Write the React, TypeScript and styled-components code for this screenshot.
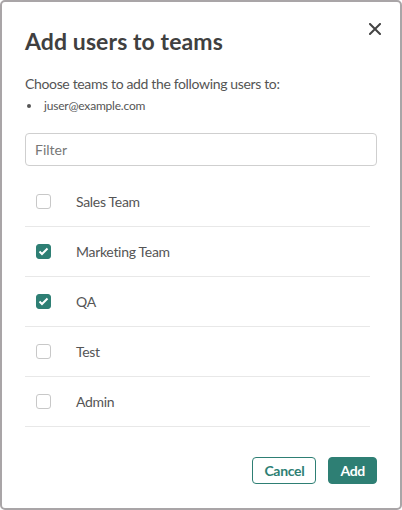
import React from "react";
import styled, { createGlobalStyle } from "styled-components";

const TEAMS = [
  { name: "Sales Team", checked: false },
  { name: "Marketing Team", checked: true },
  { name: "QA", checked: true },
  { name: "Test", checked: false },
  { name: "Admin", checked: false },
];

const GlobalStyle = createGlobalStyle`
  html, body {
    margin: 0;
    padding: 0;
    background: #ffffff;
  }
  body {
    font-family: Lato, "Noto Sans", sans-serif;
  }
  * {
    box-sizing: border-box;
  }
`;

const App = () => {
  const [teams, setTeams] = React.useState(TEAMS);

  const toggle = (index: number) => {
    setTeams((prev) =>
      prev.map((t, i) => (i === index ? { ...t, checked: !t.checked } : t))
    );
  };

  return (
    <>
      <GlobalStyle />
      <StyledDialog>
        <StyledHeader>
          <StyledTitle>Add users to teams</StyledTitle>
          <StyledClose aria-label="Close">
            <svg width="12" height="12" viewBox="0 0 12 12">
              <path
                d="M1 1 L11 11 M11 1 L1 11"
                stroke="#444"
                strokeWidth="2"
                strokeLinecap="square"
              />
            </svg>
          </StyledClose>
        </StyledHeader>

        <StyledIntro>Choose teams to add the following users to:</StyledIntro>
        <StyledUserList>
          <li>juser@example.com</li>
        </StyledUserList>

        <StyledFilter placeholder="Filter" />

        <StyledTeamList>
          {teams.map((team, i) => (
            <StyledTeamRow key={team.name} onClick={() => toggle(i)}>
              <StyledCheckbox checked={team.checked}>
                {team.checked ? (
                  <svg width="11" height="9" viewBox="0 0 11 9">
                    <path
                      d="M1.5 4.5 L4 7 L9.5 1.5"
                      fill="none"
                      stroke="#fff"
                      strokeWidth="2"
                    />
                  </svg>
                ) : null}
              </StyledCheckbox>
              <StyledTeamName>{team.name}</StyledTeamName>
            </StyledTeamRow>
          ))}
        </StyledTeamList>

        <StyledFooter>
          <StyledButton variant="secondary">Cancel</StyledButton>
          <StyledButton variant="primary">Add</StyledButton>
        </StyledFooter>
      </StyledDialog>
    </>
  );
};

export default App;

const TEAL = "#2e7f74";

const StyledDialog = styled.div`
  width: 402px;
  height: 510px;
  border: 2px solid #a9a5a7;
  border-radius: 5px;
  background: #fff;
  padding: 0 23px 0 23px;
  display: flex;
  flex-direction: column;
`;

const StyledHeader = styled.div`
  display: flex;
  justify-content: space-between;
  align-items: flex-start;
  padding-top: 25px;
`;

const StyledTitle = styled.h1`
  margin: 0;
  font-size: 23px;
  line-height: 28px;
  font-weight: 700;
  color: #404040;
  letter-spacing: 0.1px;
`;

const StyledClose = styled.button`
  border: none;
  background: none;
  padding: 0;
  margin: -8px -8px 0 0;
  width: 20px;
  height: 20px;
  display: flex;
  align-items: center;
  justify-content: center;
  cursor: pointer;
`;

const StyledIntro = styled.p`
  margin: 19px 0 0;
  font-size: 14px;
  line-height: 20px;
  color: #555;
  letter-spacing: -0.35px;
`;

const StyledUserList = styled.ul`
  margin: 4px 0 0;
  padding: 0;
  list-style: none;
  font-size: 12px;
  line-height: 16px;
  color: #555;
  letter-spacing: -0.2px;

  li {
    display: flex;
    align-items: center;
  }

  li::before {
    content: "";
    flex: 0 0 4px;
    width: 4px;
    height: 4px;
    border-radius: 50%;
    background: #555;
    margin: 0 13px 0 2px;
  }
`;

const StyledFilter = styled.input`
  margin-top: 19px;
  width: 352px;
  height: 33px;
  border: 1px solid #cfcfcf;
  border-radius: 4px;
  padding: 0 9px;
  font-family: inherit;
  font-size: 14px;
  color: #333;
  outline: none;

  &::placeholder {
    color: #777;
  }
`;

const StyledTeamList = styled.div`
  margin-top: 11px;
  width: 345px;
  display: flex;
  flex-direction: column;
`;

const StyledTeamRow = styled.label`
  height: 50px;
  display: flex;
  align-items: center;
  border-bottom: 1px solid #e8e8e8;
  padding-left: 11px;
  cursor: pointer;
`;

const StyledCheckbox = styled.span<{ checked: boolean }>`
  width: 15px;
  height: 15px;
  border-radius: 3px;
  display: flex;
  align-items: center;
  justify-content: center;
  background: ${(p) => (p.checked ? TEAL : "#fff")};
  border: 1px solid ${(p) => (p.checked ? TEAL : "#c8c8c8")};
`;

const StyledTeamName = styled.span`
  margin-left: 25px;
  font-size: 14px;
  color: #555;
  letter-spacing: -0.3px;
`;

const StyledFooter = styled.div`
  margin-top: auto;
  margin-bottom: 24px;
  display: flex;
  justify-content: flex-end;
  gap: 12px;
`;

const StyledButton = styled.button<{ variant: "primary" | "secondary" }>`
  height: 27px;
  padding: 0 11px;
  border-radius: 4px;
  font-family: inherit;
  font-size: 14px;
  font-weight: 700;
  letter-spacing: -0.3px;
  cursor: pointer;
  border: 1px solid ${TEAL};
  background: ${(p) => (p.variant === "primary" ? TEAL : "#fff")};
  color: ${(p) => (p.variant === "primary" ? "#fff" : TEAL)};
`;
